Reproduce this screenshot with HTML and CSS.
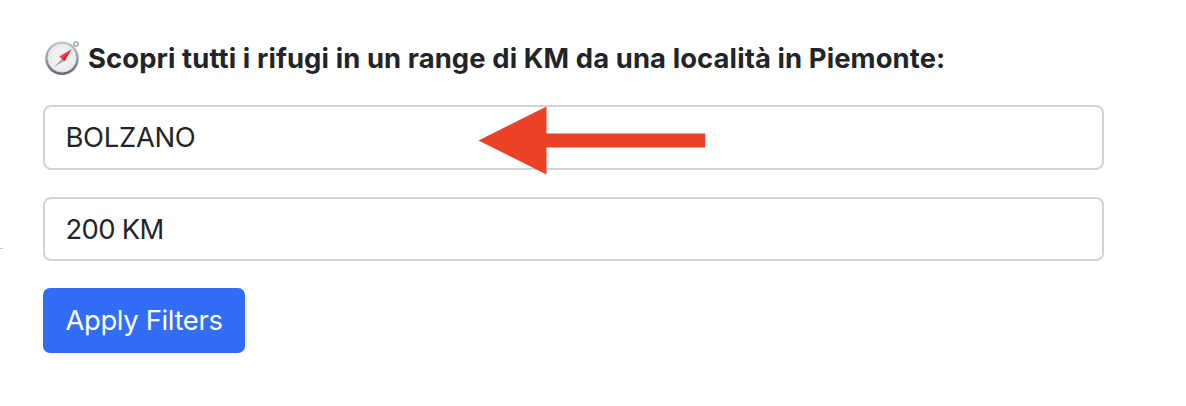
FILE: index.html
```html
<!DOCTYPE html>
<html lang="it">
<head>
<meta charset="utf-8">
<title>Rifugi</title>
<link rel="stylesheet" href="styles.css">
</head>
<body>
<span class="divider"></span>
<form class="filters">
  <label class="title" for="place">
    <svg class="compass" viewBox="0 0 36 36" aria-hidden="true">
      <defs>
        <linearGradient id="rim" x1="0" y1="0" x2="0" y2="1">
          <stop offset="0" stop-color="#c3c7cb"/>
          <stop offset="0.5" stop-color="#989ca3"/>
          <stop offset="1" stop-color="#646870"/>
        </linearGradient>
      </defs>
      <circle cx="32" cy="4" r="2.3" fill="none" stroke="#a6abb0" stroke-width="1.5"/>
      <circle cx="18" cy="18.3" r="16.8" fill="url(#rim)"/>
      <circle cx="18" cy="18" r="14.1" fill="#f0f0f1" stroke="#d6d9dc" stroke-width="1"/>
      <circle cx="18" cy="18" r="11.6" fill="none" stroke="#d3d5d8" stroke-width="1.4" stroke-dasharray="0.8 2.24"/>
      <path d="M15.8 16.4L20.4 21L9.2 27.2Z" fill="#fafafa"/>
      <path d="M9.2 27.2L18 18.8L20.4 21Z" fill="#a5a8ab"/>
      <path d="M15.2 16.4L27.4 9.2L20.6 21.2Z" fill="#ec4649"/>
      <path d="M18 18.8L27.4 9.2L20.6 21.2Z" fill="#d8292e"/>
    </svg>
    <span class="title-text">Scopri tutti i rifugi in un range di KM da una località in Piemonte:</span>
  </label>
  <div class="field" id="place"><span class="place">BOLZANO</span>
    <svg class="arrow" viewBox="0 0 228 70" aria-hidden="true"><path d="M.5 35.5L68.5 1.5V28.5H227.2V42.5H68.5V69.5Z" fill="#eb4126"/></svg>
  </div>
  <div class="field range"><span class="distance">200 KM</span></div>
  <button class="apply" type="button"><span>Apply Filters</span></button>
</form>
</body>
</html>
```
FILE: styles.css
```css
* { box-sizing: border-box; }
body {
  margin: 0;
  background: #fff;
  color: #212529;
  font: 430 27.4px/42px Inter, sans-serif;
}
.filters {
  display: flex;
  flex-direction: column;
  align-items: flex-start;
  width: 1104px;
  padding: 37px 0 0 43px;
}
.title {
  display: flex;
  align-items: center;
  height: 42px;
  margin-bottom: 26px;
  font-weight: 700;
  letter-spacing: 0.105px;
  white-space: nowrap;
}
.compass { width: 36px; height: 36px; margin: 0 8px 0 1px; }
.field {
  position: relative;
  display: flex;
  align-items: center;
  width: 1061px;
  height: 65px;
  margin-bottom: 27px;
  padding: 0 21px 2px 20.5px;
  border: 2px solid #ced4da;
  border-radius: 8px;
}
.place { letter-spacing: -0.3px; }
.distance { letter-spacing: -0.65px; }
.range { height: 64px; padding-bottom: 0; }
.arrow {
  position: absolute;
  left: 433px;
  top: -2px;
  width: 228px;
  height: 70px;
}
.apply {
  width: 202px;
  height: 65px;
  padding: 0 0 2px;
  border: 0;
  border-radius: 7px;
  background: #316df6;
  color: #fff;
  font: inherit;
  letter-spacing: -0.34px;
}
.divider {
  position: absolute;
  left: 0;
  top: 248px;
  width: 3px;
  height: 1px;
  background: #c8c8c8;
}
```
